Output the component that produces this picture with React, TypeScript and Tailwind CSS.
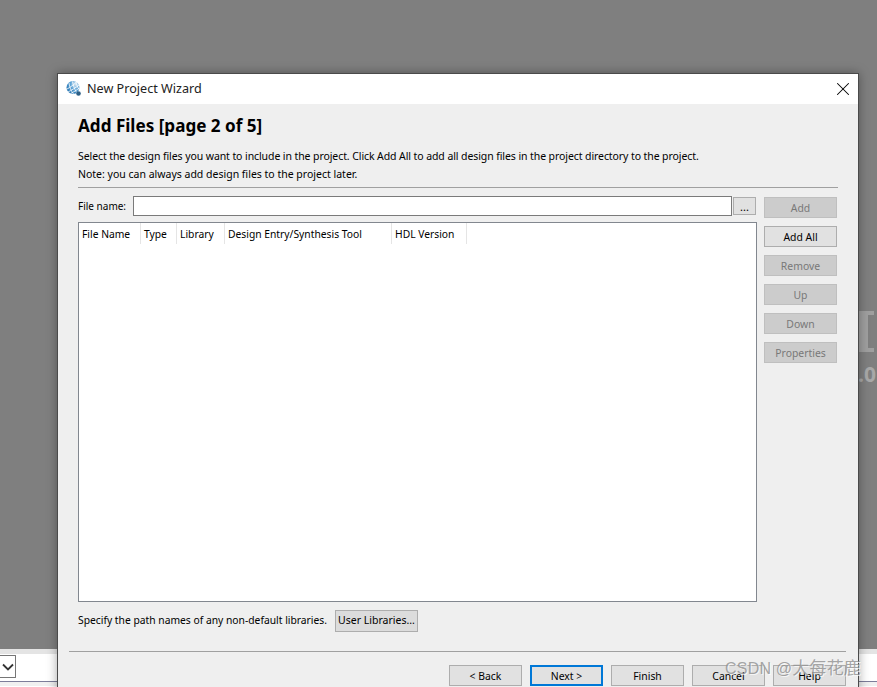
import { X } from "lucide-react";

const columns = [
  { label: "File Name", width: "w-[62px]" },
  { label: "Type", width: "w-[36px]" },
  { label: "Library", width: "w-[48px]" },
  { label: "Design Entry/Synthesis Tool", width: "w-[167px]" },
  { label: "HDL Version", width: "w-[75px]" },
];

const sideButtons = [
  { label: "Add", disabled: true },
  { label: "Add All", disabled: false },
  { label: "Remove", disabled: true },
  { label: "Up", disabled: true },
  { label: "Down", disabled: true },
  { label: "Properties", disabled: true },
];

const navButtons = ["< Back", "Next >", "Finish", "Cancel", "Help"];

function WizardIcon() {
  return (
    <svg width="16" height="16" viewBox="0 0 16 16" className="shrink-0">
      <defs>
        <radialGradient id="globe" cx="0.7" cy="0.25" r="0.9">
          <stop offset="0" stopColor="#d5e6f3" />
          <stop offset="0.45" stopColor="#5da3d6" />
          <stop offset="1" stopColor="#1c6aa8" />
        </radialGradient>
      </defs>
      <circle cx="7" cy="6.5" r="6.5" fill="url(#globe)" />
      <path d="M1 8 C4 6.5 8 3.5 10.5 1 M2 11 C5 9.5 10 6.5 13 4 M4.5 12.5 C7.5 11 11 9 13.5 7" stroke="#ffffff" strokeWidth="0.8" fill="none" />
      <path d="M3 2 C3.5 6 5 10 7.5 13 M6.5 0.5 C7 4 8.5 8 10.5 11.5 M10 1 C10.5 3.5 11.5 6 13 8.5" stroke="#ffffff" strokeWidth="0.8" fill="none" />
      <circle cx="12.5" cy="12.5" r="2.3" fill="#2c5f86" />
    </svg>
  );
}

function WizardButton({ label, disabled, focused }: { label: string; disabled?: boolean; focused?: boolean }) {
  return (
    <button
      className={`flex h-[21px] w-[73px] items-center justify-center pt-[3px] text-[10.4px] ${
        focused
          ? "border-2 border-[#0078d7] bg-[#e1e1e1] text-black"
          : disabled
            ? "border border-[#bfbfbf] bg-[#cccccc] text-[#787878]"
            : "border border-[#adadad] bg-[#e1e1e1] text-black"
      }`}
    >
      {label}
    </button>
  );
}

export default function App() {
  return (
    <div className="relative h-[687px] w-[877px] overflow-hidden bg-[#7f7f7f] font-['Noto_Sans',sans-serif]">
      {/* whatever sits behind the dialog */}
      <div className="absolute left-[859px] top-[311px] h-[41px] w-[15px] border-y-[4px] border-l-[9px] border-[#9f9f9f]" />
      <div className="absolute left-[858px] top-[363px] text-[21px] font-bold leading-[22px] text-[#a8a8a8]">.0</div>
      <div className="absolute bottom-0 left-0 right-0 h-[38px] border-t-[5px] border-[#e4e4e4] bg-white">
        <div className="mt-px flex h-[23px] w-[16px] items-center justify-center rounded-r-[1px] border border-l-0 border-[#767676]">
          <svg width="12" height="8" viewBox="0 0 12 8">
            <path d="M1 1.5 L6 6.5 L11 1.5" stroke="#333" strokeWidth="1.8" fill="none" />
          </svg>
        </div>
        <div className="mt-[3px] h-px bg-[#7d7d9a]" />
        <div className="h-[4px] bg-[#f0f0f0]" />
      </div>

      <div className="absolute left-[57px] top-[73px] w-[802px] border border-[#4a4a4a] bg-[#efefef] shadow-[0_0_10px_rgba(0,0,0,0.35)]">
        <div className="flex h-[30px] items-center justify-between bg-white pl-[8px] pr-[4px]">
          <div className="flex items-center gap-[5px]">
            <WizardIcon />
            <span className="text-[12.6px] text-[#222222]">New Project Wizard</span>
          </div>
          <X size={22} strokeWidth={1.1} className="text-black" />
        </div>

        <div className="pl-[20px] pr-[21px]">
          <h1 className="pt-[10px] text-[17.1px] font-bold leading-[24px] text-black">Add Files [page 2 of 5]</h1>
          <p className="mt-[9px] text-[10.5px] leading-[18px] tracking-[-0.09px] text-black">
            Select the design files you want to include in the project. Click Add All to add all design files in the project directory to the project.
          </p>
          <p className="text-[10.5px] leading-[18px] text-black">Note: you can always add design files to the project later.</p>
          <div className="-mr-px mt-[4px] h-px bg-[#a0a0a0]" />

          <div className="mt-[8px] flex gap-[7px]">
            <div className="flex w-[679px] flex-col">
              <div className="flex h-[20px] items-center">
                <span className="w-[55px] pt-px text-[10px] text-black">File name:</span>
                <div className="h-[20px] w-[599px] border border-[#7a7a7a] bg-white" />
                <button className="ml-px h-[18px] w-[23px] border border-[#adadad] bg-[#e1e1e1] text-[11px] leading-none text-black">
                  ...
                </button>
              </div>
              <div className="mt-[6px] h-[380px] border border-[#82878f] bg-white">
                <div className="flex h-[21px]">
                  {columns.map((col) => (
                    <div key={col.label} className={`${col.width} border-r border-[#e5e5e5] pl-[3px] text-[10.3px] leading-[23px] text-black`}>
                      {col.label}
                    </div>
                  ))}
                </div>
              </div>
            </div>

            <div className="flex flex-col gap-[8px] pt-px">
              {sideButtons.map((b) => (
                <WizardButton key={b.label} label={b.label} disabled={b.disabled} />
              ))}
            </div>
          </div>

          <div className="mt-[8px] flex h-[22px] items-center">
            <span className="w-[257px] text-[10.3px] text-black">Specify the path names of any non-default libraries.</span>
            <button className="h-[22px] w-[83px] border border-[#adadad] bg-[#dcdcdc] text-[10.5px] text-black">User Libraries...</button>
          </div>
        </div>

        <div className="ml-[11px] mr-[12px] mt-[19px] h-px bg-[#a0a0a0]" />
        <div className="flex justify-end gap-[8px] pb-[20px] pr-[12px] pt-[13px]">
          {navButtons.map((label) => (
            <WizardButton key={label} label={label} focused={label === "Next >"} />
          ))}
        </div>
      </div>

      <div className="absolute left-[725px] top-[659px] text-[16px] leading-[20px] tracking-[0.2px] text-[#8f8f8f]/80 [text-shadow:1px_1px_0_rgba(255,255,255,0.7)] font-['Liberation_Sans','Noto_Sans_CJK_SC',sans-serif]">
        CSDN @<span className="text-[17px]">大每花鹿</span>
      </div>
    </div>
  );
}
